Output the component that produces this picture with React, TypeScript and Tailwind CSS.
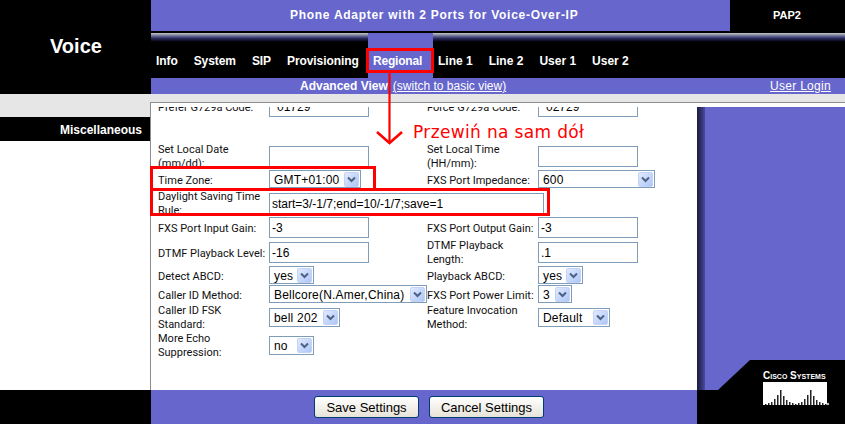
import React from "react";

const font = "font-['Liberation_Sans',Arial,sans-serif]";

function Chevron() {
  return (
    <span className="flex h-[15px] w-[15px] shrink-0 items-center justify-center rounded-[2px] border border-[#c3d3f5] bg-gradient-to-br from-[#e1eaff] to-[#aec6f6]">
      <svg width="9" height="7" viewBox="0 0 9 7">
        <path d="M1 1.5 L4.5 5 L8 1.5" fill="none" stroke="#4d6185" strokeWidth="2" />
      </svg>
    </span>
  );
}

function Input({ value, w = "w-[100px]", pad = "pl-[2px]" }: { value?: string; w?: string; pad?: string }) {
  return (
    <div className={`${w} ${pad} flex h-[21px] shrink-0 items-center overflow-hidden border border-[#7f9db9] bg-white text-[12px] leading-none text-black`}>
      <span className="whitespace-nowrap">{value}</span>
    </div>
  );
}

function Select({ value, w, h = "h-[18px]" }: { value: string; w: string; h?: string }) {
  return (
    <div className={`${w} ${h} flex shrink-0 items-center justify-between border border-[#7f9db9] bg-white pl-[4px] pr-[1px] text-[12px] leading-none text-black`}>
      <span className="whitespace-nowrap pt-[1px] tracking-[0.2px]">{value}</span>
      <Chevron />
    </div>
  );
}

function Label({ children }: { children: React.ReactNode }) {
  const single = typeof children === "string";
  return <div className={`w-[118px] shrink-0 whitespace-nowrap pl-[7px] font-['Roboto',sans-serif] text-[11px] leading-[14px] text-[#111] ${single ? "pt-[3px]" : ""}`}>{children}</div>;
}

function Label2({ children }: { children: React.ReactNode }) {
  const single = typeof children === "string";
  return <div className={`w-[111px] shrink-0 whitespace-nowrap font-['Roboto',sans-serif] text-[11px] leading-[14px] text-[#111] ${single ? "pt-[3px]" : ""}`}>{children}</div>;
}

function Row({ mt, h, children }: { mt: string; h: string; children: React.ReactNode }) {
  return <div className={`flex shrink-0 items-center ${mt} ${h}`}>{children}</div>;
}

export default function App() {
  return (
    <div className={`relative h-[424px] w-[845px] overflow-hidden bg-white ${font}`}>
      {/* header */}
      <div className="flex h-[94px] bg-black text-white">
        <div className="w-[151px] shrink-0 pt-[35px] pl-[50px] text-[20px] font-bold leading-[23px]">Voice</div>
        <div className="flex flex-1 flex-col">
          <div className="flex h-[31px]">
            <div className="w-[579px] bg-[#6666cc] pl-[139px] pt-[8px] text-[12px] font-bold leading-[15px] tracking-[0.72px]">
              Phone Adapter with 2 Ports for Voice-Over-IP
            </div>
            <div className="flex-1 pl-[43px] pt-[9px] text-[11px] font-bold leading-[13px]">PAP2</div>
          </div>
          <div className="mt-[2px] flex h-[45px] flex-col">
            <div className="flex h-[10px]">
              <div className="w-[217px] bg-gradient-to-b from-[#c8c8c8] via-[#34346a] to-black" />
              <div className="w-[65px] bg-[#6666cc]" />
              <div className="flex-1 bg-gradient-to-b from-[#c8c8c8] via-[#34346a] to-black" />
            </div>
            <div className="flex h-[35px] text-[12px] font-bold leading-[14px]">
              <div className="flex w-[217px] shrink-0 gap-[16px] pl-[5px] pt-[11px] tracking-[-0.08px]">
                <span>Info</span>
                <span>System</span>
                <span>SIP</span>
                <span>Provisioning</span>
              </div>
              <div className="h-[35px] w-[65px] shrink-0 bg-[#6666cc] pl-[5px] pt-[11px] tracking-[-0.2px]">Regional</div>
              <div className="flex gap-[16px] pl-[5px] pt-[11px]">
                <span>Line 1</span>
                <span>Line 2</span>
                <span>User 1</span>
                <span>User 2</span>
              </div>
            </div>
          </div>
          <div className="flex h-[16px] items-center bg-[#6666cc] text-[12px] leading-[14px]">
            <span className="ml-[149px] font-bold">Advanced View</span>
            <span className="ml-[5px] underline">(switch to basic view)</span>
            <span className="ml-auto mr-[14px] tracking-[0.3px] underline">User Login</span>
          </div>
        </div>
      </div>

      {/* body */}
      <div className="flex h-[296px]">
        <div className="flex w-[150px] shrink-0 flex-col">
          <div className="h-[23px] bg-[#e6e6e6]" />
          <div className="flex h-[24px] items-center justify-end bg-black pr-[8px] pt-[1px] text-[12px] font-bold text-white">Miscellaneous</div>
        </div>
        <div className="flex min-w-0 flex-1 flex-col">
          <div className="h-[8px] shrink-0 bg-[#e6e6e6]" />
          <div className="flex h-[288px] border-t border-t-[#8c8c8c]">
            <div className="w-[547px] shrink-0 border-l border-l-[#8c8c8c] pt-[4px]">
              <div className="flex h-[283px] flex-col overflow-hidden">
                <Row mt="mt-[-11px]" h="h-[21px]">
                  <Label>Prefer G729a Code:</Label>
                  <Input value="01729" pad="pl-[7px]" />
                  <div className="w-[58px]" />
                  <Label2>Force G729a Code:</Label2>
                  <Input value="02729" pad="pl-[7px]" />
                </Row>
                <Row mt="mt-[29px]" h="h-[21px]">
                  <Label>Set Local Date<br />(mm/dd):</Label>
                  <Input />
                  <div className="w-[58px]" />
                  <Label2>Set Local Time<br />(HH/mm):</Label2>
                  <Input />
                </Row>
                <Row mt="mt-[3px]" h="h-[18px]">
                  <Label>Time Zone:</Label>
                  <Select value="GMT+01:00" w="w-[92px]" />
                  <div className="w-[66px]" />
                  <Label2>FXS Port Impedance:</Label2>
                  <Select value="600" w="w-[117px]" />
                </Row>
                <Row mt="mt-[5px]" h="h-[21px]">
                  <Label>Daylight Saving Time<br />Rule:</Label>
                  <Input value="start=3/-1/7;end=10/-1/7;save=1" w="w-[275px]" />
                </Row>
                <Row mt="mt-[3px]" h="h-[21px]">
                  <Label>FXS Port Input Gain:</Label>
                  <Input value="-3" />
                  <div className="w-[58px]" />
                  <Label2>FXS Port Output Gain:</Label2>
                  <Input value="-3" />
                </Row>
                <Row mt="mt-[4px]" h="h-[21px]">
                  <Label>DTMF Playback Level:</Label>
                  <Input value="-16" />
                  <div className="w-[58px]" />
                  <Label2>DTMF Playback<br />Length:</Label2>
                  <Input value=".1" />
                </Row>
                <Row mt="mt-[3px]" h="h-[18px]">
                  <Label>Detect ABCD:</Label>
                  <Select value="yes" w="w-[45px]" />
                  <div className="w-[113px]" />
                  <Label2>Playback ABCD:</Label2>
                  <Select value="yes" w="w-[45px]" />
                </Row>
                <Row mt="mt-[1px]" h="h-[18px]">
                  <Label>Caller ID Method:</Label>
                  <Select value="Bellcore(N.Amer,China)" w="w-[158px]" />
                  <Label2>FXS Port Power Limit:</Label2>
                  <Select value="3" w="w-[34px]" />
                </Row>
                <Row mt="mt-[5px]" h="h-[19px]">
                  <Label>Caller ID FSK<br />Standard:</Label>
                  <Select value="bell 202" w="w-[71px]" h="h-[19px]" />
                  <div className="w-[87px]" />
                  <Label2>Feature Invocation<br />Method:</Label2>
                  <Select value="Default" w="w-[72px]" h="h-[19px]" />
                </Row>
                <Row mt="mt-[9px]" h="h-[19px]">
                  <Label>More Echo<br />Suppression:</Label>
                  <Select value="no" w="w-[45px]" h="h-[19px]" />
                </Row>
              </div>
            </div>
            <div className="flex flex-1 flex-col">
              <div className="h-[4px]" />
              <div className="flex flex-1">
                <div className="w-[8px] bg-gradient-to-r from-[#1a1a40] to-[#4a4a9c]" />
                <div className="flex-1 bg-[#6666cc]" />
              </div>
            </div>
          </div>
        </div>
      </div>

      {/* footer */}
      <div className="flex h-[34px] bg-black">
        <div className="w-[151px]" />
        <div className="flex w-[546px] gap-[10px] bg-[#6666cc] pl-[163px] pt-[6px]">
          <button className="h-[22px] w-[105px] rounded-[3px] border border-[#003c74] bg-gradient-to-b from-white to-[#e6e3d8] text-[13px] leading-none text-black">Save Settings</button>
          <button className="h-[22px] w-[115px] rounded-[3px] border border-[#003c74] bg-gradient-to-b from-white to-[#e6e3d8] text-[13px] leading-none text-black">Cancel Settings</button>
        </div>
      </div>

      {/* corner of the logo */}
      <svg className="absolute left-[697px] top-[360px]" width="148" height="64" viewBox="0 0 148 64">
        <path d="M21 30 L53 0 H148 V64 H0 V30 Z" fill="#000" />
      </svg>
      <div className="absolute left-[763px] top-[370px] whitespace-nowrap text-[10px] font-bold leading-[12px] text-white [font-variant:small-caps]">Cisco Systems</div>
      <svg className="absolute left-[763px] top-[382px]" width="67" height="24" viewBox="0 0 67 24">
        <rect width="64" height="23" fill="#fff" />
        {[2,5,8,11,14,17,20,23,26,29,32,35,38,41,44,47,50,53,56,59,62].map((x, i) => {
          const hs = [1,2,3,6,10,15,9,5,3,2,1,2,3,6,10,15,9,5,3,2,1];
          return <rect key={x} x={x} y={23 - hs[i]} width="1.5" height={hs[i]} fill="#222" />;
        })}
        <circle cx="65" cy="22" r="1.2" fill="#bbb" />
      </svg>

      {/* red annotations */}
      <div className="absolute left-[366px] top-[48px] h-[25px] w-[68px] border-[3px] border-[#ff0000]" />
      <div className="absolute left-[150px] top-[166px] h-[25px] w-[226px] border-[3px] border-[#ff0000]" />
      <div className="absolute left-[150px] top-[188px] h-[28px] w-[400px] border-[3px] border-[#ff0000]" />
      <svg className="absolute left-[375px] top-[72px]" width="30" height="74" viewBox="0 0 30 74">
        <path d="M14.5 0 V70" stroke="#ff0000" strokeWidth="2.2" fill="none" />
        <path d="M2 60 L14.5 71 L27 60" stroke="#ff0000" strokeWidth="2.6" fill="none" />
      </svg>
      <div className="absolute left-[413px] top-[122px] whitespace-nowrap font-['DejaVu_Sans',sans-serif] text-[17px] leading-[20px] tracking-[0.35px] text-[#ff0000]">Przewiń na sam dół</div>
    </div>
  );
}
